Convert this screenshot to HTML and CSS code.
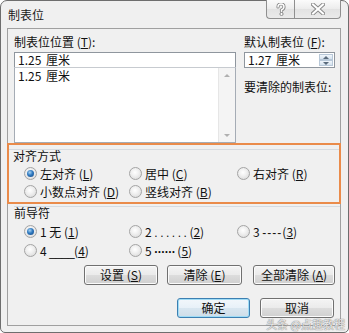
FILE: index.html
```html
<!DOCTYPE html>
<html lang="zh">
<head>
<meta charset="utf-8">
<link rel="stylesheet" href="styles.css">
</head>
<body>
<div class="window">
  <div class="titlebar">
    <span class="title">制表位</span>
    <div class="caption-btns">
      <span class="cbtn help">
        <svg width="12" height="13" viewBox="0 0 12 13"><path d="M3 4 Q3 1 6 1 Q9 1 9 4 Q9 6 6.5 7 L6.5 8.5" fill="none" stroke="#8a8a8a" stroke-width="3.2" stroke-linecap="round"/><path d="M3 4 Q3 1 6 1 Q9 1 9 4 Q9 6 6.5 7 L6.5 8.5" fill="none" stroke="#fff" stroke-width="1.4" stroke-linecap="round"/><circle cx="6.5" cy="11" r="1.6" fill="#fff" stroke="#8a8a8a" stroke-width="1"/></svg>
      </span>
      <span class="cbtn close">
        <svg width="14" height="12" viewBox="0 0 14 12"><path d="M2 1.5 L12 10.5 M12 1.5 L2 10.5" stroke="#8a8a8a" stroke-width="4" stroke-linecap="square"/><path d="M2 1.5 L12 10.5 M12 1.5 L2 10.5" stroke="#fff" stroke-width="2" stroke-linecap="square"/></svg>
      </span>
    </div>
  </div>
  <div class="client">
    <div class="top">
      <div class="col-left">
        <div class="lbl">制表位位置 (<u>T</u>):</div>
        <div class="input">1.25 厘米</div>
        <div class="listbox">
          <div class="items"><div class="item">1.25 厘米</div></div>
          <div class="vscroll"><span class="arr up"></span><span class="arr down"></span></div>
        </div>
      </div>
      <div class="col-right">
        <div class="lbl">默认制表位 (<u>F</u>):</div>
        <div class="spin">
          <span class="val">1.27 厘米</span>
          <span class="spinbtns"><span class="sb"><span class="tri up"></span></span><span class="sb"><span class="tri down"></span></span></span>
        </div>
        <div class="lbl clear-lbl">要清除的制表位:</div>
      </div>
    </div>

    <div class="group align">
      <div class="gline"></div>
      <div class="ghead">对齐方式</div>
      <div class="rgrid">
        <label class="opt"><span class="radio on"></span><span>左对齐 (<u>L</u>)</span></label>
        <label class="opt"><span class="radio"></span><span>居中 (<u>C</u>)</span></label>
        <label class="opt"><span class="radio"></span><span>右对齐 (<u>R</u>)</span></label>
        <label class="opt"><span class="radio"></span><span>小数点对齐 (<u>D</u>)</span></label>
        <label class="opt"><span class="radio"></span><span>竖线对齐 (<u>B</u>)</span></label>
      </div>
    </div>

    <div class="group leader">
      <div class="gline"></div>
      <div class="ghead">前导符</div>
      <div class="rgrid lgrid">
        <label class="opt"><span class="radio on"></span><span>1 无 (<u>1</u>)</span></label>
        <label class="opt"><span class="radio"></span><span>2 <span class="lead pd">......</span>(<u>2</u>)</span></label>
        <label class="opt"><span class="radio"></span><span>3 <span class="lead dash">----</span>(<u>3</u>)</span></label>
        <label class="opt"><span class="radio"></span><span>4 <span class="lead us">____</span>(<u>4</u>)</span></label>
        <label class="opt"><span class="radio"></span><span>5 <span class="lead dots">······</span>(<u>5</u>)</span></label>
      </div>
    </div>

    <div class="btnrow">
      <span class="btn b1"><span>设置 (<u>S</u>)</span></span>
      <span class="btn b2"><span>清除 (<u>E</u>)</span></span>
      <span class="btn b3"><span>全部清除 (<u>A</u>)</span></span>
    </div>
    <div class="btnrow bottom">
      <span class="btn b1 default"><span>确定</span></span>
      <span class="btn b2"><span>取消</span></span>
    </div>
  </div>
  <span class="watermark">头条 @点趣教程</span>
</div>
</body>
</html>
```

FILE: styles.css
```css
* { box-sizing: border-box; }
html, body { margin: 0; padding: 0; background: #ffffff; }
body {
  font-family: "Noto Sans CJK SC", "DejaVu Sans", sans-serif;
  font-size: 12px;
  color: #111;
}
u { text-decoration: underline; text-underline-offset: 1px; }

.window {
  position: relative;
  width: 349px;
  height: 333px;
  border: 1px solid #6e6e6e;
  border-radius: 7px 7px 5px 5px;
  background: #f0f0f0;
  padding: 0 7px 6px 6px;
  display: flex;
  flex-direction: column;
}

.titlebar {
  height: 27px;
  display: flex;
  justify-content: space-between;
  align-items: flex-start;
  flex: none;
}
.title {
  padding: 7px 0 0 1px;
  line-height: 14px;
  font-size: 12px;
  color: #1a1a1a;
}
.caption-btns { display: flex; margin-top: -1px; }
.cbtn {
  height: 19px;
  border: 1px solid #8f8f8f;
  border-top: none;
  background: linear-gradient(#fbfbfb, #ececec 50%, #e2e2e2 50%, #eaeaea);
  display: flex;
  align-items: center;
  justify-content: center;
}
.cbtn.help { width: 28px; border-radius: 0 0 0 4px; border-right: none; }
.cbtn.close { width: 47px; border-radius: 0 0 4px 0; }

.client {
  flex: 1;
  border: 1px solid #a0a0a0;
  background: #f0f0f0;
  display: flex;
  flex-direction: column;
}

.top {
  display: grid;
  grid-template-columns: 222px 91px;
  column-gap: 8px;
  padding: 6px 0 0 6px;
}
.lbl { line-height: 14px; height: 14px; margin-bottom: 3px; white-space: nowrap; }
.input {
  height: 16px;
  border: 1px solid #8f969e;
  background: #fff;
  line-height: 14px;
  padding-left: 3px;
  word-spacing: 2px;
}
.listbox {
  margin-top: -1px;
  height: 76px;
  border: 1px solid #a5acb5;
  border-top-color: #c7cbd0;
  background: #fff;
  display: flex;
}
.items { flex: 1; padding: 1px 0 0 3px; line-height: 14px; word-spacing: 2px; }
.vscroll {
  width: 17px;
  background: #f4f4f4;
  border-left: 1px solid #e6e6e6;
  display: flex;
  flex-direction: column;
  justify-content: space-between;
  align-items: center;
  padding: 6px 0 5px;
}
.arr { width: 0; height: 0; border-left: 3px solid transparent; border-right: 3px solid transparent; }
.arr.up { border-bottom: 3px solid #b0b0b0; }
.arr.down { border-top: 3px solid #b0b0b0; }

.spin {
  height: 16px;
  border: 1px solid #8f969e;
  background: #fff;
  display: flex;
  justify-content: space-between;
}
.spin .val { line-height: 14px; padding-left: 3px; word-spacing: 2px; }
.spinbtns { width: 15px; display: flex; flex-direction: column; padding: 1px 1px 1px 0; }
.sb {
  flex: 1;
  background: linear-gradient(#f1f6fb, #d5e2ee);
  border: 1px solid #b8c8d8;
  display: flex;
  align-items: center;
  justify-content: center;
}
.tri { width: 0; height: 0; border-left: 3px solid transparent; border-right: 3px solid transparent; }
.tri.up { border-bottom: 3px solid #5a6b7c; }
.tri.down { border-top: 3px solid #5a6b7c; }
.clear-lbl { margin-top: 12px; }

.group { flex: none; }
.gline { border-top: 1px solid #d6dbe0; }
.ghead { line-height: 12px; height: 12px; }
.opt { display: flex; align-items: center; gap: 3px; white-space: nowrap; }
.radio {
  width: 13px;
  height: 13px;
  border-radius: 50%;
  border: 1px solid #a4a4a4;
  background: radial-gradient(circle at 45% 40%, #ffffff 0, #f0f0f0 40%, #d4d4d4 100%);
  display: flex;
  align-items: center;
  justify-content: center;
  flex: none;
}
.radio.on::after {
  content: "";
  width: 7px;
  height: 7px;
  border-radius: 50%;
  background: radial-gradient(circle at 40% 35%, #a9d3f2 0, #2e79c0 45%, #17457d 100%);
}
.lead { font-family: "Liberation Sans", sans-serif; }
.lead.pd { letter-spacing: 2.5px; }
.lead.dash { letter-spacing: 1px; }
.lead.us { letter-spacing: -0.5px; }
.lead.dots { font-weight: bold; letter-spacing: -0.5px; margin-right: 2px; }

.align {
  height: 61px;
  margin: 0 -1px;
  border: 2px solid #ea8b4a;
  padding: 4px 0 2px 0;
}
.align .ghead { padding-left: 4px; }
.rgrid {
  display: grid;
  grid-template-columns: 105px 108px 1fr;
  grid-auto-rows: 18px;
  margin-top: 2px;
  padding-left: 15px;
}

.leader { padding-top: 2px; }
.leader .gline { margin-left: 6px; }
.leader .ghead { padding-left: 6px; }
.lgrid { grid-auto-rows: 19px; margin-top: 3px; padding-left: 16px; }

.btnrow {
  display: flex;
  justify-content: flex-end;
  padding-right: 5px;
  margin-top: 5px;
}
.btnrow.bottom { margin-top: 13px; padding-right: 6px; }
.btn {
  height: 20px;
  border: 1px solid #707070;
  border-radius: 3px;
  background: linear-gradient(#f4f4f4, #ebebeb 48%, #dcdcdc 52%, #d0d0d0);
  box-shadow: inset 0 0 0 1px #fbfbfb;
  display: flex;
  align-items: center;
  justify-content: center;
  line-height: 14px;
}
.btn.b1 { width: 74px; }
.btn.b2 { width: 75px; margin-left: 9px; }
.btn.b3 { width: 82px; margin-left: 11px; }
.bottom .btn.b1 { width: 73px; }
.bottom .btn.b2 { width: 74px; margin-left: 10px; }
.btn.default {
  border-color: #3c7fb1;
  box-shadow: inset 0 0 0 1px #9fdcf6;
  background: linear-gradient(#f2f7fb, #e8f1f8 48%, #d8e6f0 52%, #cfdde8);
}

.watermark {
  position: absolute;
  right: 3px;
  bottom: 2px;
  font-size: 11px;
  line-height: 12px;
  color: rgba(255, 255, 255, 0.85);
  text-shadow: 0 0 1px #777, 0 0 1px #777;
}
```
